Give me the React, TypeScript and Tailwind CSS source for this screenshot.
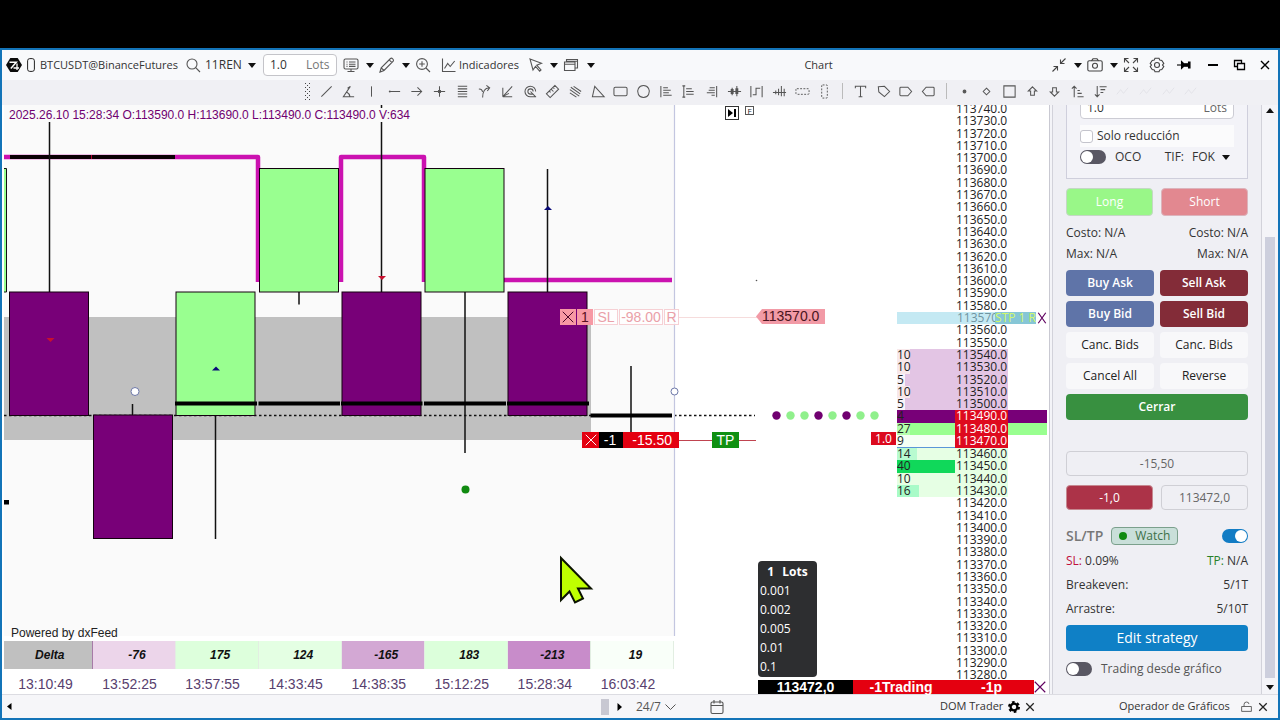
import type { ReactNode } from "react";

const ui = "font-['Open_Sans','Noto_Sans',sans-serif]";
const arial = "font-['Liberation_Sans',Arial,sans-serif]";

function Caret({ className = "" }: { className?: string }) {
  return (
    <svg className={`h-[5px] w-[8px] shrink-0 ${className}`} viewBox="0 0 8 5" fill="#111">
      <path d="M0 0h8L4 5z" />
    </svg>
  );
}

function Glyph({ children, className = "size-4", width = 1.1 }: { children: ReactNode; className?: string; width?: number }) {
  return (
    <svg className={`shrink-0 ${className}`} viewBox="0 0 16 16" fill="none" stroke="currentColor" strokeWidth={width}>
      {children}
    </svg>
  );
}

function IconButton({ label, className = "", children }: { label: string; className?: string; children: ReactNode }) {
  return (
    <button type="button" aria-label={label} className={`flex shrink-0 items-center justify-center ${className}`}>
      {children}
    </button>
  );
}

function TitleBar() {
  return (
    <header className="flex h-[30px] shrink-0 items-center bg-[#f8f9fb] pr-[5px] pl-1 text-xs text-[#333]">
      <svg className="size-4 shrink-0" viewBox="0 0 16 16">
        <path d="M4.300 1h7.400L16 8l-4.300 7H4.300L0 8z" fill="#0b0b0b" />
        <path d="M3.500 5.200h6.800L4.800 11.500" fill="none" stroke="#fff" strokeWidth="1.500" />
        <path d="M7.500 11h5.500M11 6.500V13" fill="none" stroke="#fff" strokeWidth="1.300" />
      </svg>
      <svg className="mx-[5px] h-[14px] w-[8px] shrink-0" viewBox="0 0 8 14" fill="none" stroke="#222">
        <rect x=".6" y=".6" width="6.8" height="12.8" rx="2.2" />
      </svg>
      <span className="w-[145px] shrink-0 text-[11px] whitespace-nowrap">BTCUSDT@BinanceFutures</span>
      <IconButton label="Search instrument" className="w-4 text-[#555]">
        <Glyph>
          <circle cx="7" cy="7" r="5" />
          <path d="M10.7 10.7 15 15" />
        </Glyph>
      </IconButton>
      <button type="button" className="ml-1 flex w-[51px] shrink-0 items-center justify-between">
        11REN
        <Caret />
      </button>
      <label className="ml-[7px] flex h-[22px] w-[74px] shrink-0 items-center rounded border border-[#c4c4c9] bg-white px-[6px]">
        <input aria-label="Order size" defaultValue="1.0" className="w-9 bg-transparent outline-none" />
        <span className="text-[#777]">Lots</span>
      </label>
      <button type="button" aria-label="Templates" className="ml-[6px] flex w-[31px] shrink-0 items-center justify-between text-[#555]">
        <Glyph>
          <rect x="1" y="2" width="14" height="10" rx="1.5" />
          <path d="M3.5 5h1M6 5h6.500M3.500 7.200h1M6 7.200h6.500M3.500 9.400h1M6 9.400h6.500M8 12v2.200M4.500 14.500h7" />
        </Glyph>
        <Caret />
      </button>
      <button type="button" aria-label="Drawing tools" className="ml-[5px] flex w-[31px] shrink-0 items-center justify-between text-[#555]">
        <Glyph>
          <path d="M1 15l1.200-4.200L11.500 1.500q1-.8 2.200.3t.5 2.300L5 13.500zM10.200 2.900l3 3M2.200 10.800 5 13.500" />
        </Glyph>
        <Caret />
      </button>
      <IconButton label="Zoom in" className="ml-[5px] w-4 text-[#555]">
        <Glyph>
          <circle cx="7" cy="7" r="5.400" />
          <path d="M11 11l4 4M7 4.200v5.600M4.200 7h5.600" />
        </Glyph>
      </IconButton>
      <button type="button" className="ml-[10px] flex w-[82px] shrink-0 items-center gap-[2px] text-[11px]">
        <Glyph className="size-4 text-[#555]">
          <path d="M1.500 1.500v13h13M3.500 11.500l3.200-5 2.500 3 4.500-5.500" />
        </Glyph>
        Indicadores
      </button>
      <button type="button" aria-label="Pointer" className="ml-[5px] flex w-[30px] shrink-0 items-center justify-between text-[#555]">
        <Glyph>
          <path d="M2 2l11.500 4.200-4.800 2 4.300 4.800-1.300 1.200-4.200-4.800L5 13z" />
        </Glyph>
        <Caret />
      </button>
      <button type="button" aria-label="Windows" className="ml-[5px] flex w-[32px] shrink-0 items-center justify-between text-[#555]">
        <Glyph>
          <path d="M1.500 5h10.500v8.500H1.500zM1.500 7.200h10.500M3.500 5V2.500h11v8.500H12M3.500 4.200h11" />
        </Glyph>
        <Caret />
      </button>
      <h1 className="flex-1 pr-[9px] text-center text-[11px]">Chart</h1>
      <div className="flex shrink-0 items-center text-[#444]">
        <button type="button" aria-label="Collapse" className="flex w-[31px] items-center justify-between">
          <Glyph>
            <path d="M14.500 1.500 9.500 6.500M9.500 2.500v4h4M1.500 14.500l5-5M6.500 13.500v-4h-4" />
          </Glyph>
          <Caret />
        </button>
        <button type="button" aria-label="Screenshot" className="ml-[5px] flex w-[31px] items-center justify-between">
          <Glyph>
            <rect x=".8" y="3.800" width="14.400" height="10.200" rx="1.500" />
            <path d="M4.500 3.800 6 1.800h4l1.500 2" />
            <circle cx="8" cy="8.800" r="2.500" />
          </Glyph>
          <Caret />
        </button>
        <IconButton label="Full screen" className="ml-[5px] w-4">
          <Glyph>
            <path d="M1.500 5.500v-4h4M1.500 1.500 6 6M10.500 1.500h4v4M14.500 1.500 10 6M1.500 10.500v4h4M1.500 14.500 6 10M14.500 10.500v4h-4M14.500 14.500 10 10" />
          </Glyph>
        </IconButton>
        <IconButton label="Settings" className="ml-[10px] w-4">
          <Glyph>
            <path d="M6 1.200h4l.8 1.900 2 .3 2 3L13.500 8l1.300 1.600-2 3-2 .3-.8 1.900H6l-.8-1.900-2-.3-2-3L2.500 8 1.200 6.400l2-3 2-.3z" />
            <circle cx="8" cy="8" r="2.500" />
          </Glyph>
        </IconButton>
        <IconButton label="Pin" className="ml-[11px] w-4 text-black">
          <Glyph>
            <path d="M1 8h5" />
            <path d="M5.500 4.500 8 6.800h4.500V5H14v6h-1.500V9.200H8l-2.500 2.300z" fill="currentColor" />
          </Glyph>
        </IconButton>
        <IconButton label="Minimize" className="ml-[13px] w-4 text-black">
          <Glyph width={2}>
            <path d="M3 8h10" />
          </Glyph>
        </IconButton>
        <IconButton label="Restore" className="ml-[10px] w-4 text-black">
          <Glyph width={1.3}>
            <path d="M10.500 6V3.500h-7v6h3M6.500 6.500h7v6h-7z" />
          </Glyph>
        </IconButton>
        <IconButton label="Close" className="ml-[10px] w-4 text-black">
          <Glyph width={1.4}>
            <path d="M4 4l8 8M12 4l-8 8" />
          </Glyph>
        </IconButton>
      </div>
    </header>
  );
}

const lineTools: [string, string][] = [
  ["Line", "M2.500 13.500 13.500 2.500"],
  ["Angle", "M10 2.500 2.500 13.500h11.500M6 8.500q3 1.500 3.500 5M7 4.500l3-2"],
  ["Vertical line", "M8 2.500v11"],
  ["Horizontal line", "M2 8h12M3 7v2"],
  ["Ray", "M2.500 8h11M9 3.500 13.500 8 9 12.500"],
  ["Cross", "M8 2.500v11M2 8h12M7 7h2v2H7z"],
  ["Fibonacci levels", "M3 2.500h10M3 5.200h10M3 8h10M3 10.700h10M3 13.500h10"],
  ["Fork", "M2 5.500q3-.5 4 3M6 14.500Q6 4.500 13 4M10 1.500 13.500 4l-2.500 3.500"],
  ["Fan", "M3 13.500 13 2.500M3 13.500h10M3 13.500V4M3 13.500 9.500 10"],
  ["Fibonacci circles", "M13.500 8A5.700 5.700 0 1 0 8 13.700h6M10.800 8A2.800 2.800 0 1 0 8 10.800h3M8 8l5.500 5.700"],
  ["Ruler", "M10.500 1.500l4 4-9 9-4-4zM4.500 7.500l1.500 1.500M6.500 5.500 9 8M8.500 3.500l1.500 1.500"],
  ["Channel", "M2 6l10 7M3 3.500l10 7M6 2.500l8 5.500M2 9.500l7 4.500"],
  ["Triangle", "M4 2.500 14 13.500H1.500z"],
  ["Rectangle", "M2.500 3.500h11q1.500 0 1.500 1.500v6q0 1.500-1.500 1.500h-11Q1 12.500 1 11V5q0-1.500 1.500-1.500z"],
  ["Ellipse", "M8 1.700a6.300 6.300 0 1 0 .01 0z"],
  ["Volume profile left", "M2 2v12M4.500 4h5M4.500 6.600h8M4.500 9.300h6M4.500 12h9"],
  ["Profile fixed", "M3 2v12M1.500 2h3M1.500 14h3M5.500 5h6M5.500 8h8M5.500 11h8"],
  ["Volume profile right", "M13.500 2v12M6 4h5.500M5 6.600h6.500M3 9.300h8.500M8 12h3.500"],
  ["Cluster", "M1 8h14M4.500 6h2v4h-2zM9.500 5h2v5h-2zM5.500 4v8M10.500 2v11"],
  ["Steps", "M2 2v12M14 2v12M4 11.500h3.500v-7H12"],
  ["Bars", "M1 9h14M4 7v4M7 5v7M10 2v11M13 5v8"],
];

const shapeTools: [string, string][] = [
  ["Text", "M2.500 4.500v-2h11v2M8 2.500v11M6 13.500h4"],
  ["Tag", "M2.500 3 9 2.500l5.500 5.500L9 13.500 3 8.500z"],
  ["Label right", "M3 3.500h7.500L14.500 8l-4 4.500H3Q2 12.500 2 11.500v-7q0-1 1-1z"],
  ["Label left", "M13 3.500H5.500L1.500 8l4 4.500H13q1 0 1-1v-7q0-1-1-1z"],
];

const markTools: [string, string][] = [
  ["Diamond", "M8 4.500 11.500 8 8 11.500 4.500 8z"],
  ["Square", "M2 2h12v12H2z"],
  ["Arrow up", "M8 3 12.500 7.500H10V12H6V7.500H3.500z"],
  ["Arrow down", "M8 13l4.500-4.500H10V4H6v4.500H3.500z"],
  ["Sort ascending", "M4.500 14V2.500M2 5l2.500-2.500L7 5M8 7h2.500M8 10h4.500M8 13.500h6.500"],
  ["Sort descending", "M4.500 2v12M2 11l2.500 2.500L7 11M7 3h7.500M8 6h5M8 9h3"],
];

function Tool({ name, d }: { name: string; d: string }) {
  return (
    <IconButton label={name} className="h-5">
      <Glyph className="size-[15px]" width={1.1}>
        <path d={d} />
      </Glyph>
    </IconButton>
  );
}

function DrawingBar() {
  return (
    <nav aria-label="Drawing tools" className="flex h-[25px] shrink-0 items-center bg-[#f0f0f4] pb-[3px] pl-[303px] text-[#555]">
      <svg className="h-[17px] w-[6px] shrink-0" viewBox="0 0 6 17" stroke="#444" strokeDasharray="1 3">
        <path d="M.5 0v17M4.500 0v17M2.500 2v15" />
      </svg>
      <div className="ml-[4px] grid w-[521px] shrink-0 grid-cols-[repeat(23,minmax(0,1fr))]">
        {lineTools.map(([name, d]) => (
          <Tool key={name} name={name} d={d} />
        ))}
        <IconButton label="Horizontal zone">
          <Glyph className="size-[15px]" width={1}>
            <rect x="1" y="5" width="14" height="6" rx="1" strokeDasharray="2 1.500" />
          </Glyph>
        </IconButton>
        <IconButton label="Vertical zone">
          <Glyph className="size-[15px]" width={1}>
            <rect x="5" y="1" width="6" height="14" rx="1" strokeDasharray="2 1.500" />
          </Glyph>
        </IconButton>
      </div>
      <span className="mx-[6px] h-4 w-px shrink-0 bg-[#bbb]" />
      <div className="grid w-[91px] shrink-0 grid-cols-4">
        {shapeTools.map(([name, d]) => (
          <Tool key={name} name={name} d={d} />
        ))}
      </div>
      <span className="mx-[6px] h-4 w-px shrink-0 bg-[#bbb]" />
      <div className="grid w-[249px] shrink-0 grid-cols-[repeat(11,minmax(0,1fr))]">
        <IconButton label="Dot">
          <Glyph className="size-[15px]">
            <circle cx="8" cy="8" r="1.500" fill="currentColor" />
          </Glyph>
        </IconButton>
        {markTools.map(([name, d]) => (
          <Tool key={name} name={name} d={d} />
        ))}
        {["Wave 3", "Wave 5", "Wave ABC", "Wave WXY"].map((name) => (
          <IconButton key={name} label={name} className="text-[#e2e2e8]">
            <Glyph className="size-[15px]" width={1}>
              <path d="M2 11l4-5 3 4 5-6" />
            </Glyph>
          </IconButton>
        ))}
      </div>
    </nav>
  );
}

const candles = [
  { x: 9.5, y: 292, up: false },
  { x: 93.5, y: 415, up: false },
  { x: 176, y: 292, up: true },
  { x: 259.5, y: 168.500, up: true },
  { x: 342, y: 292, up: false },
  { x: 425, y: 168.500, up: true },
  { x: 508, y: 292, up: false },
];

const tape = ["s", "b", "b", "s", "b", "s", "b", "b"];

function ChartDrawing() {
  return (
    <svg className="absolute inset-0 h-full w-full overflow-visible" viewBox="2 105 672 531" preserveAspectRatio="none">
      <rect x="4" y="105" width="670" height="531" fill="#fafafa" />
      <rect x="4" y="317" width="587" height="123" fill="#c0c0c0" />
      <path d="M4 415.500H755" stroke="#111" strokeWidth="1.300" strokeDasharray="2.500 2.500" />
      <g fill="none" stroke="#cb12b0" strokeWidth="4.500" strokeLinejoin="round">
        <path d="M4 157H258V282M341 282V157H424V282M504 280H672" />
      </g>
      <path d="M10 157H91M92 157H175" stroke="#0a0004" strokeWidth="4" />
      <path d="M91.500 155v4" stroke="#b00030" />
      <path d="M4 168.500h2.500v123.500H4" fill="#99ff90" stroke="#111" />
      <g stroke="#111" strokeWidth="1.500">
        <path d="M49.500 122V292M132.500 404V415M215.500 415V539M299 292V304.500M381.500 105V292M465 292V453M547.500 169V292M631 366V433" />
      </g>
      {candles.map((c) => (
        <rect key={c.x} x={c.x} y={c.y} width="79" height="123.500" fill={c.up ? "#99ff90" : "#780078"} stroke="#14000f" />
      ))}
      <path
        d="M175 403.500H257M258.500 403.500H340M341 403.500H422.500M424 403.500H506M507 403.500H589M590.500 415.500H672"
        stroke="#000"
        strokeWidth="4"
      />
      <path d="M378 276h8l-4 4zM46.500 338h8l-4 4z" fill="#c8102e" />
      <path d="M544 210h8l-4-4zM212 370.500h8l-4-4z" fill="#0a0a78" />
      <rect x="4" y="500" width="5" height="4.500" fill="#000" />
      <circle cx="465.500" cy="489.500" r="4" fill="#108a10" />
      <path d="M674.500 105V636" stroke="#c3c6e0" strokeWidth="1.200" />
      <g fill="#fff" stroke="#6d78a8">
        <circle cx="135" cy="391.500" r="4" />
        <circle cx="674.500" cy="391.500" r="3.500" />
      </g>
      <path d="M679 317.500H757" stroke="#f6dcdc" />
      <path d="M679 440.500H756" stroke="#c04450" />
      <circle cx="756.500" cy="280.500" r=".8" fill="#555" />
      {tape.map((side, i) => (
        <circle key={i} cx={776.500 + i * 14} cy="415.500" r="4.200" fill={side === "s" ? "#700070" : "#90f08c"} />
      ))}
      <path
        d="M561 558V600L569.500 591.500 575 602.500 583 598.500 578 588.500H591z"
        fill="#bfff00"
        stroke="#0c1400"
        strokeWidth="2"
      />
    </svg>
  );
}

function OrderLabels() {
  return (
    <>
      <div className={`absolute top-[204px] -right-[5px] flex h-4 items-center gap-px text-sm leading-4 text-[#eaa0a8] ${arial}`}>
        <button type="button" aria-label="Cancel stop order" className="flex h-4 w-4 items-center justify-center bg-[#f799a4] text-[#402]">
          <Glyph className="size-[14px]">
            <path d="M2 2l12 12M14 2 2 14" />
          </Glyph>
        </button>
        <span className="w-4 bg-[#f799a4] text-center text-[#5a1020]">1</span>
        <span className="h-4 w-6 border border-[#f6d0d4] bg-white/80 text-center leading-[14px]">SL</span>
        <span className="flex h-4 w-11 justify-center border border-[#f6d0d4] bg-white/80 leading-[14px]">-98.00</span>
        <span className="h-4 w-[15px] border border-[#f6d0d4] bg-white/80 text-center leading-[14px]">R</span>
      </div>
      <div className={`absolute top-[327px] -right-[5px] flex h-4 items-center text-sm leading-4 text-white ${arial}`}>
        <button type="button" aria-label="Close position" className="flex h-4 w-[17px] items-center justify-center bg-[#e40010]">
          <Glyph className="size-[14px]">
            <path d="M2 2l12 12M14 2 2 14" />
          </Glyph>
        </button>
        <span className="w-6 bg-black pr-[2px] text-center">-1</span>
        <span className="w-14 bg-[#e40010] pr-[7px] text-right">-15.50</span>
      </div>
    </>
  );
}

const deltas = [
  ["-76", "bg-[#ecd5ea]", "13:52:25"],
  ["175", "bg-[#ddffdc]", "13:57:55"],
  ["124", "bg-[#e4ffe3]", "14:33:45"],
  ["-165", "bg-[#d3a8d4]", "14:38:35"],
  ["183", "bg-[#dcffdb]", "15:12:25"],
  ["-213", "bg-[#c88cca]", "15:28:34"],
  ["19", "bg-[#f9fff9]", "16:03:42"],
];

function ChartPane() {
  return (
    <section className="flex min-w-0 flex-1 flex-col bg-white">
      <div className="relative min-h-[531px] flex-1">
        <ChartDrawing />
        <p className={`absolute top-[3px] left-[7px] bg-[#fafafa] text-xs leading-[14px] whitespace-nowrap text-[#700070] ${arial}`}>
          2025.26.10 15:28:34 O:113590.0 H:113690.0 L:113490.0 C:113490.0 V:634
        </p>
        <OrderLabels />
        <p className={`absolute bottom-[-4px] left-[9px] text-xs leading-[14px] text-[#222] ${arial}`}>Powered by dxFeed</p>
      </div>
      <table className={`mt-[5px] ml-[2px] table-fixed border-collapse text-center ${arial}`}>
        <tbody>
          <tr className="h-7 text-xs font-bold text-[#111] italic">
            <th scope="row" className="w-[88px] border-r border-[#a77ba8] bg-[#c0c0c0] pl-1">
              Delta
            </th>
            {deltas.map(([value, color, time]) => (
              <td key={time} className={`border-r border-[#e2eee2] pl-[7px] ${color}`}>
                {value}
              </td>
            ))}
          </tr>
          <tr className="h-[25px] text-sm text-[#58406e]">
            <td className="pt-1 pr-[5px] leading-5">13:10:49</td>
            {deltas.map(([, , time]) => (
              <td key={time} className="pt-1 pr-2 leading-5">
                {time}
              </td>
            ))}
          </tr>
        </tbody>
      </table>
    </section>
  );
}

const volumes: Record<number, [string, string, string, string]> = {
  113540: ["10", "bg-[#e3c5e4]", "w-[13px] bg-[#f8e8ea]", "bg-[#e3c5e4]"],
  113530: ["10", "bg-[#e3c5e4]", "w-[13px] bg-[#f8e8ea]", "bg-[#e3c5e4]"],
  113520: ["5", "bg-[#e3c5e4]", "w-[8px] bg-[#f8f4f8]", "bg-[#e3c5e4]"],
  113510: ["10", "bg-[#e3c5e4]", "w-[13px] bg-[#f8e8ea]", "bg-[#e3c5e4]"],
  113500: ["5", "bg-[#e3c5e4]", "w-[8px] bg-[#f8f4f8]", "bg-[#e3c5e4]"],
  113490: ["4", "bg-[#780078]", "w-[8px]", "bg-[#de0a1e] text-white"],
  113480: ["27", "bg-[#99ff90]", "w-[13px] bg-[#b4ffac]", "bg-[#de0a1e] text-white"],
  113470: ["9", "bg-[#f4fff4] border-b border-[#5a96d8]", "w-[8px]", "bg-[#de0a1e] text-white"],
  113460: ["14", "bg-[#e6ffe4]", "w-[20px] bg-[#b8fbd0]", "bg-[#e6ffe4]"],
  113450: ["40", "bg-[#10d85a]", "w-[13px]", "bg-[#e6ffe4]"],
  113440: ["10", "bg-[#e6ffe4]", "w-[13px]", "bg-[#e6ffe4]"],
  113430: ["16", "bg-[#e6ffe4]", "w-[22px] bg-[#a8fbc8]", "bg-[#e6ffe4]"],
};

const tails: Record<number, string> = { 113490: "bg-[#780078]", 113480: "bg-[#99ff90]" };

const prices = Array.from({ length: 47 }, (_, i) => 113740 - i * 10);

function Ladder() {
  return (
    <div className="flex w-[152px] shrink-0 flex-col overflow-hidden">
      <table aria-label="DOM" className="-mt-[2px] -mb-[2px] flex flex-1 flex-col text-xs leading-3 text-[#222]">
        <tbody className="flex flex-1 flex-col">
          {prices.map((price) => {
            const volume = volumes[price];
            if (price === 113570) {
              return (
                <tr key={price} className="flex flex-1 items-center text-[#6f93a0]">
                  <td className="w-[58px] self-stretch bg-[#c4e9f3]" />
                  <td className="w-10 self-stretch overflow-hidden bg-[#c4e9f3] pl-[2px]">113570</td>
                  <td className="w-[41px] self-stretch bg-[#86c6d6] text-right whitespace-nowrap text-[#d2f86a]">STP 1 R</td>
                  <td className="flex w-3 justify-center">
                    <button type="button" aria-label="Cancel stop" className="text-[#600060]">
                      <Glyph className="size-3" width={1.6}>
                        <path d="M3 1l10 14M13 1 3 15" />
                      </Glyph>
                    </button>
                  </td>
                </tr>
              );
            }
            return (
              <tr key={price} className="flex flex-1">
                <td className={`w-[58px] ${volume ? volume[1] : ""}`}>
                  {volume && <span className={`block h-full ${volume[2]}`}>{volume[0]}</span>}
                </td>
                <td className={`w-[53px] pl-px ${volume ? volume[3] : ""}`}>{`${price}.0`}</td>
                <td className={`w-[39px] ${tails[price] ?? ""}`} />
              </tr>
            );
          })}
        </tbody>
      </table>
    </div>
  );
}

function OrderFlow() {
  return (
    <div className="relative flex-1">
      <div className="absolute top-px left-[51px] flex gap-[6px] text-[#222]">
        <IconButton label="Go to last bar" className="size-[14px] border border-[#333]">
          <svg className="size-2" viewBox="0 0 8 8">
            <path d="M0 0l5 4-5 4zM6 0h2v8H6z" />
          </svg>
        </IconButton>
        <button type="button" className="h-[9px] w-[9px] border border-[#555] text-[8px] leading-[7px]">
          F
        </button>
      </div>
      <div className={`absolute top-[204px] left-[82px] flex h-[15px] ${arial}`}>
        <svg className="h-[15px] w-[6px]" viewBox="0 0 6 15" fill="#f29aa6">
          <path d="M6 0v15L0 7.500z" />
        </svg>
        <span className="w-[63px] bg-[#f29aa6] text-sm leading-[15px] text-[#4a1420]">113570.0</span>
      </div>
      <button type="button" className={`absolute top-[327px] left-[38px] h-4 w-[27px] bg-[#109012] text-sm leading-4 text-white ${arial}`}>
        TP
      </button>
      <span className="absolute top-[327px] right-px h-[13px] w-[25px] bg-[#dc0a1e] text-center text-xs leading-[13px] text-white">1.0</span>
      <div className="absolute bottom-[3px] left-[84px] h-[116px] w-[59px] rounded bg-[#2d2e30] px-[2px] pt-px text-xs text-white">
        <p className="flex h-[19px] items-center justify-center gap-2 font-bold">
          <span>1</span>
          <span>Lots</span>
        </p>
        <ul>
          {["0.001", "0.002", "0.005", "0.01", "0.1"].map((size) => (
            <li key={size} className="h-[19px] leading-[19px]">
              {size}
            </li>
          ))}
        </ul>
      </div>
    </div>
  );
}

function Switch({ id, on = false, label }: { id: string; on?: boolean; label?: string }) {
  return (
    <input
      id={id}
      type="checkbox"
      role="switch"
      aria-label={label}
      defaultChecked={on}
      className="relative h-[14px] w-[26px] shrink-0 appearance-none rounded-full bg-[#595763] before:absolute before:top-px before:left-px before:size-3 before:rounded-full before:bg-white checked:bg-[#127cc4] checked:before:left-[13px]"
    />
  );
}

function Pair({ left, right, className = "" }: { left: ReactNode; right: ReactNode; className?: string }) {
  return (
    <div className={`flex items-center justify-between ${className}`}>
      <span>{left}</span>
      <span>{right}</span>
    </div>
  );
}

const actions: [string, string][] = [
  ["Buy Ask", "bg-[#5f74a8] font-semibold text-white"],
  ["Sell Ask", "bg-[#832c38] font-semibold text-white"],
  ["Buy Bid", "bg-[#5f74a8] font-semibold text-white"],
  ["Sell Bid", "bg-[#832c38] font-semibold text-white"],
  ["Canc. Bids", "bg-[#f8f8fa] font-medium text-[#222]"],
  ["Canc. Bids", "bg-[#f8f8fa] font-medium text-[#222]"],
  ["Cancel All", "bg-[#f8f8fa] font-medium text-[#222]"],
  ["Reverse", "bg-[#f8f8fa] font-medium text-[#222]"],
];

function TradePanel() {
  return (
    <aside className="flex w-[229px] shrink-0 border-l border-[#c9c9d2] bg-[#f4f4f8] pl-[2px] text-xs text-[#333]">
      <div className="min-w-0 flex-1 border-x border-[#d2d2da] bg-[#efeff4] px-[13px]">
        <div className="h-[74px] overflow-hidden border-x border-b border-[#cfcfdc] bg-[#f3f3f8] px-[13px]">
          <label className="-mt-[8px] flex h-[22px] items-center rounded border border-[#ccccd4] bg-white px-[6px]">
            <input aria-label="Quantity" defaultValue="1.0" className="min-w-0 flex-1 bg-transparent outline-none" />
            <span className="text-[#666]">Lots</span>
          </label>
          <label className="mt-[6px] flex h-[22px] items-center gap-1 bg-[#fbfbfc]">
            <input type="checkbox" className="size-[13px] appearance-none rounded-[3px] border border-[#c4c4cc] bg-white" />
            Solo reducción
          </label>
          <div className="mt-[3px] flex h-[14px] items-center">
            <Switch id="oco" />
            <label htmlFor="oco" className="ml-[9px]">
              OCO
            </label>
            <label htmlFor="tif" className="ml-auto">
              TIF:
            </label>
            <select id="tif" defaultValue="FOK" className="ml-2 w-7 appearance-none bg-transparent outline-none">
              <option>FOK</option>
              <option>GTC</option>
            </select>
            <Caret className="mr-1 ml-[2px]" />
          </div>
        </div>
        <div className="mt-[9px] grid grid-cols-2 gap-2 text-white">
          <button type="button" className="h-7 rounded border border-[#c4d8c4] bg-[#99f788]">
            Long
          </button>
          <button type="button" className="h-7 rounded border border-[#dcb4bc] bg-[#e28890]">
            Short
          </button>
        </div>
        <Pair className="mt-[6px] h-[21px]" left="Costo: N/A" right="Costo: N/A" />
        <Pair className="h-[21px]" left="Max: N/A" right="Max: N/A" />
        <div className="mt-[6px] grid grid-cols-2 gap-x-[6px] gap-y-[5px]">
          {actions.map(([label, style], i) => (
            <button key={i} type="button" className={`h-[26px] rounded ${style}`}>
              {label}
            </button>
          ))}
          <button type="button" className="col-span-2 h-[26px] rounded bg-[#389040] font-semibold text-white">
            Cerrar
          </button>
        </div>
        <div className="mt-[31px] grid grid-cols-2 gap-x-2 gap-y-[9px] text-center leading-[23px] text-[#666]">
          <output className="col-span-2 h-[25px] rounded border border-[#cfcfd5]">-15,50</output>
          <output className="h-[25px] rounded border border-[#c68890] bg-[#ac3348] text-white">-1,0</output>
          <output className="h-[25px] rounded border border-[#cfcfd5]">113472,0</output>
        </div>
        <div className="mt-[16px] flex h-5 items-center">
          <span className="text-sm font-semibold text-[#777]">SL/TP</span>
          <button
            type="button"
            className="ml-2 flex h-[18px] w-[67px] items-center justify-center gap-2 rounded border border-[#7ba08c] bg-[#c9dfd9] text-[#3c7048]"
          >
            <span className="size-2 rounded-full bg-[#108a10]" />
            Watch
          </button>
          <span className="ml-auto flex">
            <Switch id="strategy" on label="SL/TP strategy" />
          </span>
        </div>
        <Pair
          className="mt-[3px] h-6"
          left={
            <>
              <span className="text-[#c0103c]">SL:</span> 0.09%
            </>
          }
          right={
            <>
              <span className="text-[#288028]">TP:</span> N/A
            </>
          }
        />
        <Pair className="h-6" left="Breakeven:" right="5/1T" />
        <Pair className="h-6" left="Arrastre:" right="5/10T" />
        <button type="button" className="mt-[4px] h-[26px] w-full rounded bg-[#0f80c6] text-sm text-white">
          Edit strategy
        </button>
        <div className="mt-[10px] flex items-center gap-[9px]">
          <Switch id="chart-trading" />
          <label htmlFor="chart-trading" className="text-[#555]">
            Trading desde gráfico
          </label>
        </div>
      </div>
      <div className="flex w-4 shrink-0 flex-col items-center pt-[3px] pb-1">
        <Caret className="rotate-180" />
        <span className="mt-[124px] mb-[7px] w-[10px] flex-1 bg-[#cdcfdd]" />
        <Caret />
      </div>
    </aside>
  );
}

function SmallClose({ label }: { label: string }) {
  return (
    <IconButton label={label} className="w-3 text-[#222]">
      <Glyph className="size-3" width={1.7}>
        <path d="M3 3l10 10M13 3 3 13" />
      </Glyph>
    </IconButton>
  );
}

function StatusBar() {
  return (
    <footer className="flex h-6 shrink-0 items-center border-t border-[#dcdce2] bg-[#f6f6f9] pr-[9px] pl-[5px] text-xs text-[#333]">
      <svg className="h-[7px] w-[5px] shrink-0" viewBox="0 0 5 7">
        <path d="M4.500 0v7L0 3.500z" />
      </svg>
      <div className="flex flex-1 justify-end">
        <span className="h-4 w-2 bg-[#c8c8d2]" />
      </div>
      <svg className="mx-2 h-[8px] w-[5px] shrink-0" viewBox="0 0 5 8">
        <path d="M.5 0v8L5 4z" />
      </svg>
      <button type="button" className="ml-[6px] flex w-[40px] shrink-0 items-center justify-between text-[#555]">
        24/7
        <svg className="h-[6px] w-[11px]" viewBox="0 0 11 6" fill="none" stroke="#555">
          <path d="M.5.500l5 5 5-5" />
        </svg>
      </button>
      <IconButton label="Calendar" className="ml-[33px] w-4 text-[#555]">
        <Glyph>
          <rect x="2" y="3" width="12" height="11.500" rx="1.500" />
          <path d="M2 6.500h12M5 1v3.500M11 1v3.500" />
        </Glyph>
      </IconButton>
      <span className="ml-[215px] w-[68px] shrink-0 text-[11px] whitespace-nowrap">DOM Trader</span>
      <IconButton label="DOM settings" className="mr-1 w-3 text-black">
        <Glyph className="size-3" width={3}>
          <circle cx="8" cy="8" r="4.500" />
          <circle cx="8" cy="8" r="6.500" strokeDasharray="3.400 3.400" />
        </Glyph>
      </IconButton>
      <SmallClose label="Close DOM Trader" />
      <span className="ml-[83px] w-[121px] shrink-0 text-[11px] whitespace-nowrap">Operador de Gráficos</span>
      <IconButton label="Lock panel" className="mr-[5px] w-3 text-[#555]">
        <Glyph className="size-[13px]">
          <path d="M2 8h12v6H2zM5 8V5.500Q5 2.500 8 2.500t3 2.500" />
        </Glyph>
      </IconButton>
      <SmallClose label="Close trading panel" />
    </footer>
  );
}

export default function App() {
  return (
    <div className={`flex min-h-screen flex-col bg-black pt-12 ${ui}`}>
      <div className="flex flex-1 flex-col border-2 border-[#1374b8] bg-white">
        <TitleBar />
        <DrawingBar />
        <main className="flex flex-1">
          <ChartPane />
          <section className="relative flex w-[375px] shrink-0 flex-col">
            <div className="flex flex-1">
              <OrderFlow />
              <Ladder />
            </div>
            <div className={`flex h-[14px] pl-[84px] text-center text-sm leading-[14px] font-bold text-white ${arial}`}>
              <span className="w-[95px] bg-black">113472,0</span>
              <span className="w-24 bg-[#e40010]">-1Trading</span>
              <span className="w-[85px] bg-[#e40010]">-1p</span>
              <IconButton label="Close all" className="w-3 text-[#600060]">
                <Glyph className="size-3" width={1.5}>
                  <path d="M1 1l14 14M15 1 1 15" />
                </Glyph>
              </IconButton>
            </div>
          </section>
          <TradePanel />
        </main>
        <StatusBar />
      </div>
    </div>
  );
}
